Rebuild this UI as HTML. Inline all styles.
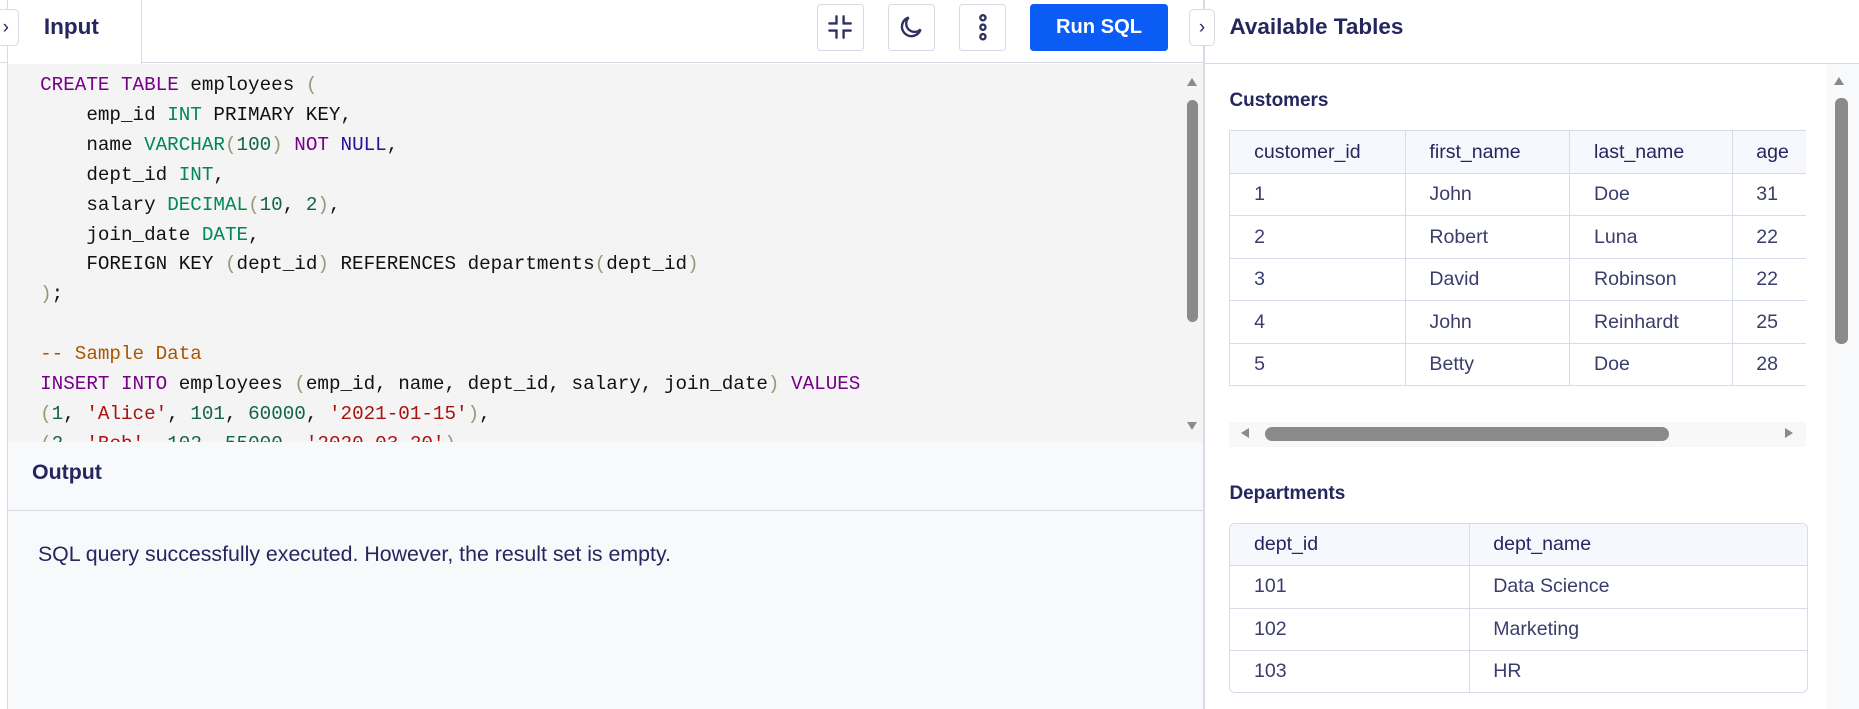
<!DOCTYPE html>
<html><head><meta charset="utf-8"><style>
html,body{margin:0;padding:0;width:1859px;height:709px;overflow:hidden;background:#fff}
#w{zoom:1.18559;width:1568px;height:598px;position:relative;font-family:"Liberation Sans",sans-serif;color:#25265e}
.a{position:absolute}
.btn{position:absolute;top:3px;width:38px;height:38px;border:1px solid #d6dbe6;border-radius:3px;background:#fff;display:flex;align-items:center;justify-content:center}
.code{font-family:"Liberation Mono",monospace;font-size:16.25px;line-height:25.2px;white-space:pre;color:#111}
.k{color:#770088}.t{color:#008855}.n{color:#116644}.s{color:#aa1111}.c{color:#aa5500}.p{color:#999977}
table{border-collapse:collapse;font-size:16.5px;color:#3b3d6b}
td,th{border:1px solid #d6dde8;height:35px;padding:0 0 0 20px;text-align:left;font-weight:normal}
th{background:#f6f8fd;color:#25265e}
.tog{position:absolute;width:20px;height:29px;border:1px solid #d6dbe6;border-radius:4px;background:#fff;font-size:16px;display:flex;align-items:center;justify-content:center;color:#25265e}
</style></head><body><div id="w">
<div class="a" style="left:0;top:0;width:1015px;height:53px;border-bottom:1px solid #d6dbe6;box-sizing:border-box"></div>
<div class="a" style="left:6px;top:0;width:112px;height:54px;background:#fff;border-right:1px solid #d6dbe6;border-left:1px solid #d6dbe6"></div>
<div class="tog" style="left:-6px;top:8px">&#8250;</div>
<div class="a" style="left:37px;top:12px;font-size:19px;font-weight:bold">Input</div>
<div class="btn" style="left:689px"><svg width="22" height="22" viewBox="0 0 22 22" fill="none" stroke="#2e3060" stroke-width="2" stroke-linecap="round"><path d="M8 2v6H2M14 2v6h6M8 20v-6H2M14 20v-6h6"/></svg></div>
<div class="btn" style="left:749px"><svg width="22" height="22" viewBox="0 0 22 22" fill="none" stroke="#2e3060" stroke-width="2"><path d="M9 3a8 8 0 1 0 10 10A7 7 0 0 1 9 3z"/></svg></div>
<div class="btn" style="left:809px"><svg width="10" height="24" viewBox="0 0 10 24" fill="none" stroke="#2e3060" stroke-width="2"><circle cx="5" cy="4" r="2.2"/><circle cx="5" cy="12" r="2.2"/><circle cx="5" cy="20" r="2.2"/></svg></div>
<div class="a" style="left:869px;top:3px;width:116px;height:40px;background:#0a5cf5;border-radius:3px;color:#fff;font-weight:bold;font-size:17px;display:flex;align-items:center;justify-content:center">Run SQL</div>
<div class="a" style="left:6px;top:54px;width:1009px;height:319px;background:#f4f4f4;overflow:hidden;border-left:1px solid #d6dbe6">
<div class="code a" style="left:27px;top:6px"><span class="k">CREATE</span> <span class="k">TABLE</span> employees <span class="p">(</span>
    emp_id <span class="t">INT</span> PRIMARY KEY,
    name <span class="t">VARCHAR</span><span class="p">(</span><span class="n">100</span><span class="p">)</span> <span class="k">NOT</span> <span style="color:#221199">NULL</span>,
    dept_id <span class="t">INT</span>,
    salary <span class="t">DECIMAL</span><span class="p">(</span><span class="n">10</span>, <span class="n">2</span><span class="p">)</span>,
    join_date <span class="t">DATE</span>,
    FOREIGN KEY <span class="p">(</span>dept_id<span class="p">)</span> REFERENCES departments<span class="p">(</span>dept_id<span class="p">)</span>
<span class="p">)</span>;

<span class="c">-- Sample Data</span>
<span class="k">INSERT</span> <span class="k">INTO</span> employees <span class="p">(</span>emp_id, name, dept_id, salary, join_date<span class="p">)</span> <span class="k">VALUES</span>
<span class="p">(</span><span class="n">1</span>, <span class="s">'Alice'</span>, <span class="n">101</span>, <span class="n">60000</span>, <span class="s">'2021-01-15'</span><span class="p">)</span>,
<span class="p">(</span><span class="n">2</span>, <span class="s">'Bob'</span>, <span class="n">102</span>, <span class="n">55000</span>, <span class="s">'2020-03-20'</span><span class="p">)</span>,</div>
<div class="a" style="left:990px;top:0;width:18px;height:319px;background:#f4f4f4"></div>
<div class="a" style="left:994px;top:12px;width:0;height:0;border:5px solid transparent;border-bottom:7px solid #8a8a8a;border-top:0"></div>
<div class="a" style="left:994px;top:30px;width:10px;height:188px;background:#8a8a8a;border-radius:5px"></div>
<div class="a" style="left:994px;top:302px;width:0;height:0;border:5px solid transparent;border-top:7px solid #8a8a8a;border-bottom:0"></div>
</div>
<div class="a" style="left:6px;top:373px;width:1009px;height:225px;background:#f8f9fb;border-left:1px solid #d6dbe6"></div>
<div class="a" style="left:6px;top:430px;width:1009px;height:1px;background:#d6dbe6"></div>
<div class="a" style="left:27px;top:388px;font-size:18px;font-weight:bold">Output</div>
<div class="a" style="left:32px;top:457px;font-size:18px">SQL query successfully executed. However, the result set is empty.</div>
<div class="a" style="left:1015px;top:0;width:1px;height:598px;background:#d6dbe6"></div>
<div class="a" style="left:1016px;top:53px;width:552px;height:1px;background:#d6dbe6"></div>
<div class="tog" style="left:1003px;top:8px">&#8250;</div>
<div class="a" style="left:1037px;top:12px;font-size:19px;font-weight:bold">Available Tables</div>
<div class="a" style="left:1541px;top:54px;width:27px;height:544px;background:#f8f9fb"></div>
<div class="a" style="left:1547px;top:65px;width:0;height:0;border:5px solid transparent;border-bottom:7px solid #8a8a8a;border-top:0"></div>
<div class="a" style="left:1548px;top:83px;width:11px;height:207px;background:#8a8a8a;border-radius:5px"></div>
<div class="a" style="left:1037px;top:76px;font-size:16px;font-weight:bold">Customers</div>
<div class="a" style="left:1037px;top:110px;width:486px;overflow:hidden">
<table style="width:520px"><tr><th style="width:127px">customer_id</th><th style="width:118px">first_name</th><th style="width:116px">last_name</th><th>age</th></tr>
<tr><td>1</td><td>John</td><td>Doe</td><td>31</td></tr>
<tr><td>2</td><td>Robert</td><td>Luna</td><td>22</td></tr>
<tr><td>3</td><td>David</td><td>Robinson</td><td>22</td></tr>
<tr><td>4</td><td>John</td><td>Reinhardt</td><td>25</td></tr>
<tr><td>5</td><td>Betty</td><td>Doe</td><td>28</td></tr></table></div>
<div class="a" style="left:1037px;top:356px;width:486px;height:21px;background:#f8f8f8"></div>
<div class="a" style="left:1047px;top:361px;width:0;height:0;border:5px solid transparent;border-right:7px solid #8a8a8a;border-left:0"></div>
<div class="a" style="left:1067px;top:360px;width:341px;height:12px;background:#8a8a8a;border-radius:6px"></div>
<div class="a" style="left:1506px;top:361px;width:0;height:0;border:5px solid transparent;border-left:7px solid #8a8a8a;border-right:0"></div>
<div class="a" style="left:1037px;top:407px;font-size:16px;font-weight:bold">Departments</div>
<div class="a" style="left:1037px;top:441px;width:486px;border:1px solid #d6dde8;border-radius:5px;overflow:hidden">
<table style="width:488px;margin:-1px"><tr><th style="width:181px">dept_id</th><th>dept_name</th></tr>
<tr><td>101</td><td>Data Science</td></tr>
<tr><td>102</td><td>Marketing</td></tr>
<tr><td>103</td><td>HR</td></tr></table></div>
</div></body></html>
